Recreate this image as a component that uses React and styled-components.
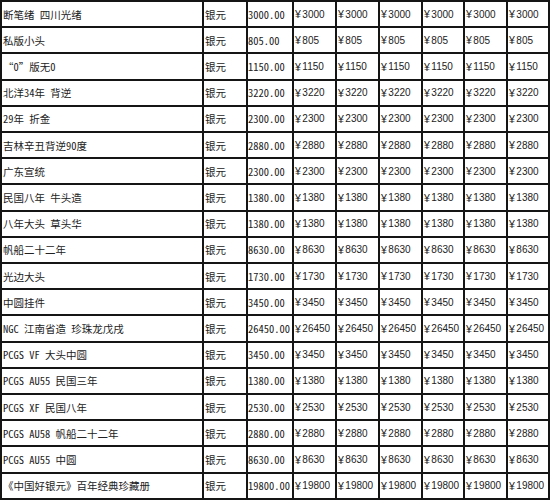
import React from "react";
import styled, { createGlobalStyle } from "styled-components";

const GlobalStyle = createGlobalStyle`
  html, body {
    margin: 0;
    padding: 0;
    background: #fff;
  }
`;

const Table = styled.div`
  width: 550px;
  height: 500px;
  box-sizing: border-box;
  padding: 2px;
  background: #151515;
  display: flex;
  flex-direction: column;
  gap: 2px;
`;

const Row = styled.div`
  flex: 1;
  display: grid;
  grid-template-columns: 200px 42px 44px 41px 41px 41px 40px 41px 40px;
  gap: 2px;
  min-height: 0;
`;

const Cell = styled.div`
  background: #fff;
  display: flex;
  align-items: center;
  padding-left: ${(p) => (p.$pad === undefined ? 1 : p.$pad)}px;
  white-space: pre;
  overflow: hidden;
  color: #222;
  font-family: "Noto Sans Mono CJK SC", "Noto Sans CJK SC", "Liberation Mono", monospace;
  font-size: ${(p) => p.$size || 10.5}px;
`;

const Money = styled(Cell)`
  font-family: "Liberation Sans", "Noto Sans CJK SC", sans-serif;
  font-size: 10px;
`;

const Yen = styled.span`
  margin-right: 1.5px;
  font-size: 10.5px;
`;

const rows = [
  ["断笔绪 四川光绪", "3000.00", "3000"],
  ["私版小头", "805.00", "805"],
  ["“0”版无0", "1150.00", "1150"],
  ["北洋34年 背逆", "3220.00", "3220"],
  ["29年 折金", "2300.00", "2300"],
  ["吉林辛丑背逆90度", "2880.00", "2880"],
  ["广东宣统", "2300.00", "2300"],
  ["民国八年 牛头造", "1380.00", "1380"],
  ["八年大头 草头华", "1380.00", "1380"],
  ["帆船二十二年", "8630.00", "8630"],
  ["光边大头", "1730.00", "1730"],
  ["中圆挂件", "3450.00", "3450"],
  ["NGC 江南省造 珍珠龙戊戌", "26450.00", "26450"],
  ["PCGS VF 大头中圆", "3450.00", "3450"],
  ["PCGS AU55 民国三年", "1380.00", "1380"],
  ["PCGS XF 民国八年", "2530.00", "2530"],
  ["PCGS AU58 帆船二十二年", "2880.00", "2880"],
  ["PCGS AU55 中圆", "8630.00", "8630"],
  ["《中国好银元》百年经典珍藏册", "19800.00", "19800"],
];

const App = () => {
  return (
    <>
      <GlobalStyle />
      <Table>
        {rows.map(([name, price, yen], i) => (
          <Row key={i}>
            <Cell $pad={1}>{name}</Cell>
            <Cell>银元</Cell>
            <Cell $pad={0}>{price}</Cell>
            {[0, 1, 2, 3, 4, 5].map((k) => (
              <Money key={k}>
                <Yen>¥</Yen>
                {yen}
              </Money>
            ))}
          </Row>
        ))}
      </Table>
    </>
  );
};

export default App;
